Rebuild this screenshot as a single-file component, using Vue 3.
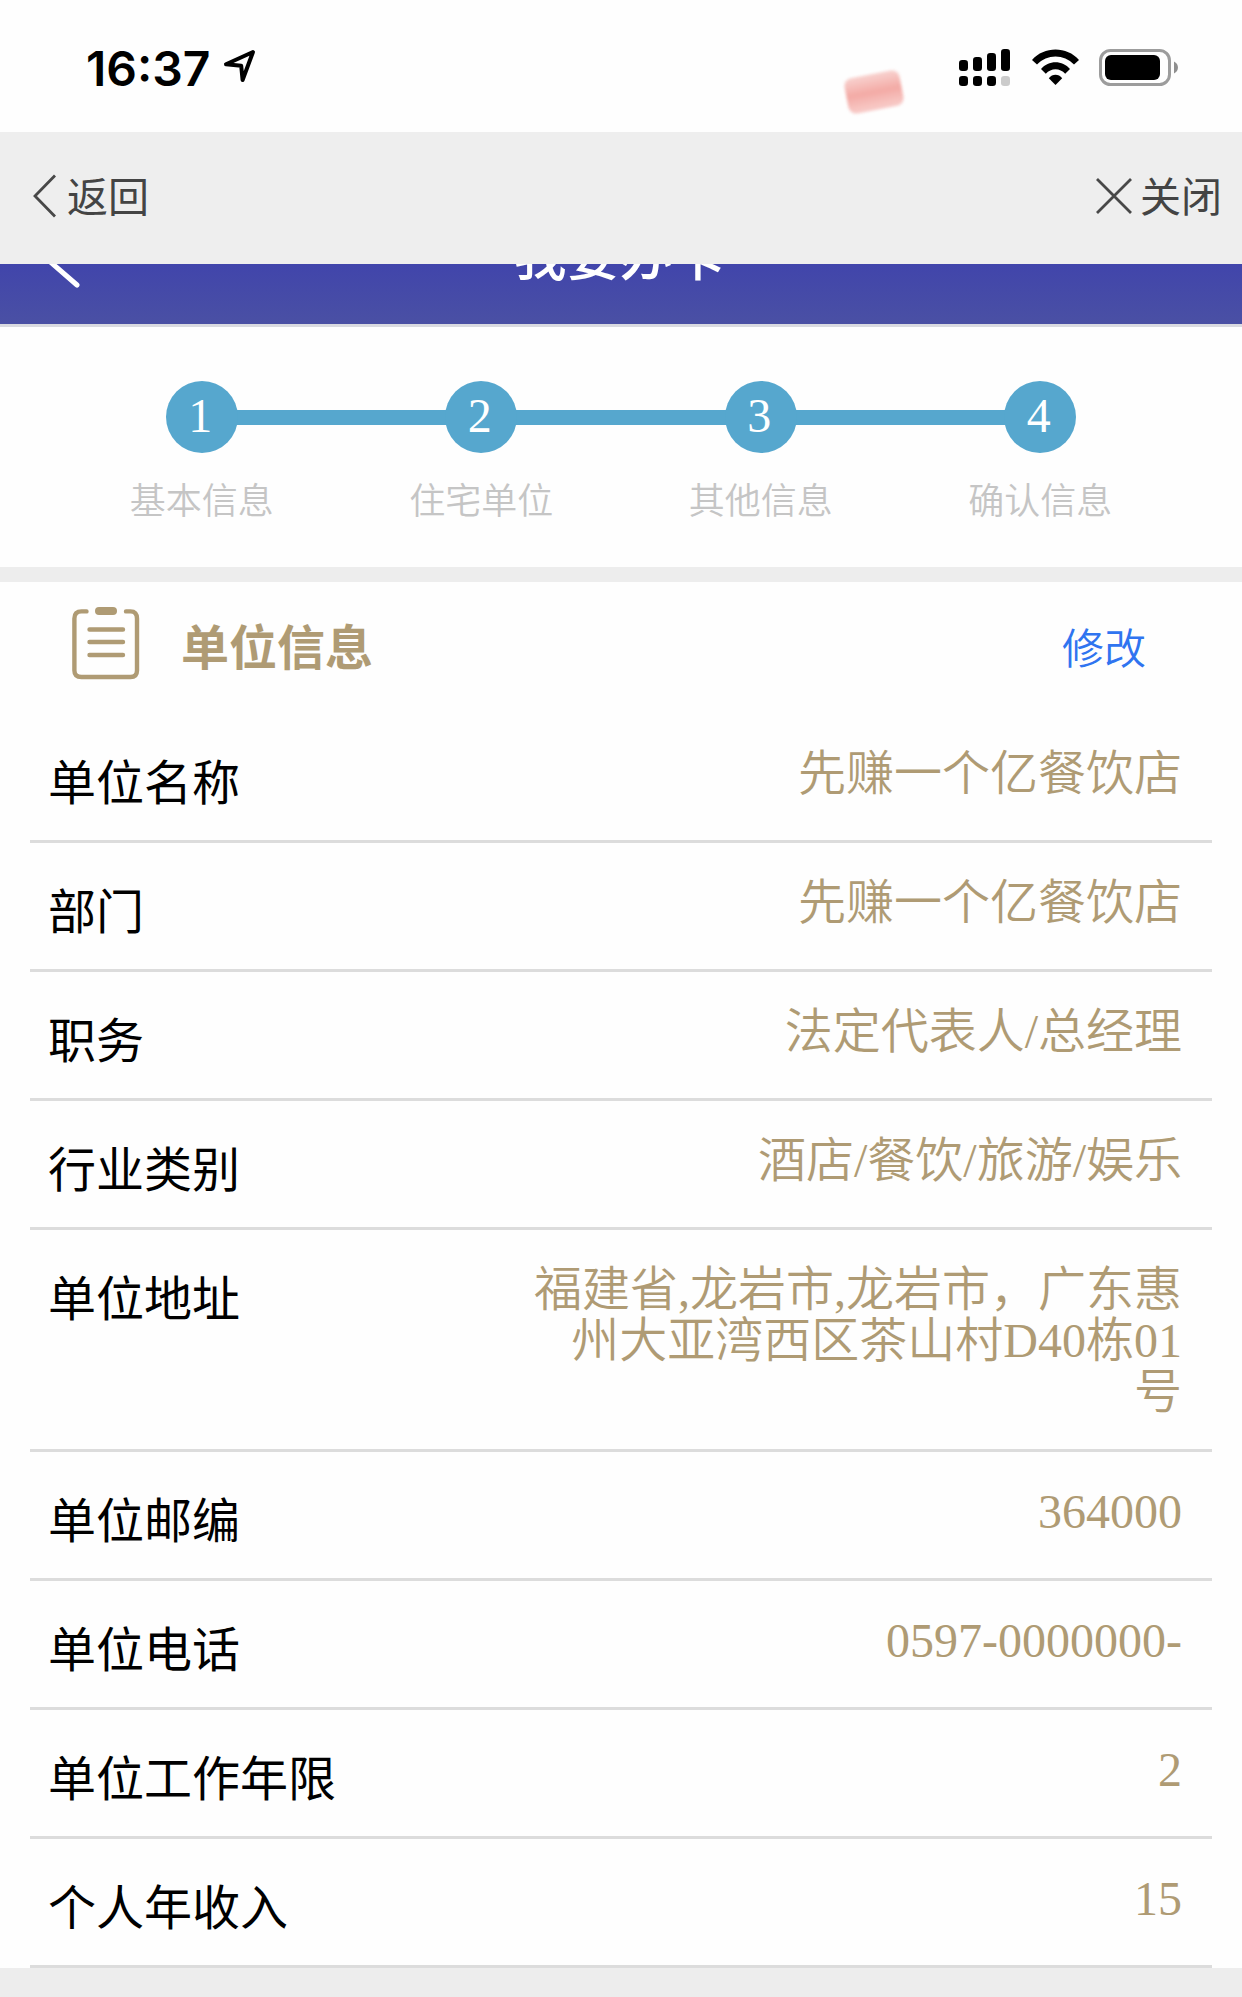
<template>
  <div class="page">
    <!-- phone status bar -->
    <div class="status">
      <span class="time">16:37</span>
      <svg class="loc" width="34" height="34" viewBox="0 0 34 34">
        <path d="M30 3 L3 15.3 L18.2 16.8 L19.6 31 Z" />
      </svg>
      <div class="smudge"></div>
      <svg class="signal" width="222" height="40" viewBox="0 0 222 40">
        <rect v-for="b in bars" :key="b.x" :x="b.x" :y="b.y" width="9" :height="22 - b.y" rx="3.2" />
        <rect v-for="b in bars" :key="'d' + b.x" :x="b.x" y="27" width="9" height="10" rx="3.2" :class="{ off: b.off }" />
        <g transform="translate(74 0)">
          <path d="M0 11 C12 -3 35 -3 47 11 L42 15.6 C32 4.8 15 4.8 5 15.6 Z" />
          <path d="M9 20 C16.5 11 30.5 11 38 20 L33.2 24.8 C28 18.8 19 18.8 13.8 24.8 Z" />
          <path d="M16.8 29.2 C20.4 24.6 26.6 24.6 30.2 29.2 L23.5 36 Z" />
        </g>
        <rect class="shell" x="142.5" y="1.5" width="69" height="34" rx="10" />
        <rect x="147" y="6" width="55" height="25" rx="6" />
        <path class="cap" d="M216 12.5 C221.3 15 221.3 22 216 24.5 Z" />
      </svg>
    </div>

    <div class="nav">
      <a class="nav-btn">
        <svg width="24" height="44" viewBox="0 0 24 44"><path d="M22 1.5 L2 22 L22 42.5" /></svg>
        <span>返回</span>
      </a>
      <a class="nav-btn close">
        <svg width="36" height="36" viewBox="0 0 36 36"><path d="M1 1 L35 35 M35 1 L1 35" /></svg>
        <span>关闭</span>
      </a>
    </div>

    <!-- page title, scrolled half way under the nav -->
    <div class="banner">
      <svg class="back" width="40" height="56" viewBox="0 0 40 56"><path d="M35 3 L5 27 L35 53" /></svg>
      <h1>我要办卡</h1>
    </div>

    <div class="steps">
      <div v-for="(s, i) in steps" :key="s" class="step">
        <i v-if="i > 0" class="line"></i>
        <b class="dot">{{ i + 1 }}</b>
        <span class="step-name">{{ s }}</span>
      </div>
    </div>

    <div class="card">
      <div class="card-head">
        <svg width="68" height="74" viewBox="0 0 68 74">
          <path d="M14.5 4.4 H9.5 Q2.4 4.4 2.4 11.5 V63.5 Q2.4 70 9.5 70 H58.5 Q65 70 65 63.5 V11.5 Q65 4.4 58.5 4.4 H54" />
          <path d="M17.5 22.5 H51 M17.5 35 H51 M17.5 48 H51" />
          <rect x="23" y="0" width="22" height="8" rx="4" />
        </svg>
        <h2>单位信息</h2>
        <a class="edit">修改</a>
      </div>
      <div v-for="row in rows" :key="row.label" class="row">
        <span class="label">{{ row.label }}</span>
        <span class="value">{{ row.value }}</span>
      </div>
    </div>
  </div>
</template>

<script setup>
const bars = [
  { x: 1, y: 11 },
  { x: 15, y: 8 },
  { x: 29, y: 4 },
  { x: 43, y: 0, off: true }
];

const steps = ['基本信息', '住宅单位', '其他信息', '确认信息'];

const rows = [
  { label: '单位名称', value: '先赚一个亿餐饮店' },
  { label: '部门', value: '先赚一个亿餐饮店' },
  { label: '职务', value: '法定代表人/总经理' },
  { label: '行业类别', value: '酒店/餐饮/旅游/娱乐' },
  { label: '单位地址', value: '福建省,龙岩市,龙岩市，广东惠州大亚湾西区茶山村D40栋01号' },
  { label: '单位邮编', value: '364000' },
  { label: '单位电话', value: '0597-0000000-' },
  { label: '单位工作年限', value: '2' },
  { label: '个人年收入', value: '15' }
];
</script>

<style>
body {
  margin: 0;
  background: #ededed;
}
</style>

<style scoped>
.page {
  width: 1242px;
  height: 1997px;
  overflow: hidden;
  background: #ededed;
  font-family: "Liberation Serif", "Noto Sans CJK SC", serif;
}

/* status bar */
.status {
  position: relative;
  display: flex;
  align-items: flex-start;
  height: 132px;
  box-sizing: border-box;
  padding: 49px 62px 0 86px;
  background: #fefefe;
}
.time {
  width: 137px;
  font: 600 48px/39px Inter, sans-serif;
  color: #000;
}
.loc {
  fill: none;
  stroke: #000;
  stroke-width: 4;
  stroke-linejoin: round;
}
.signal {
  margin-left: auto;
}
.signal .off {
  fill: #cbcbcb;
}
.signal .shell {
  fill: none;
  stroke: #9c9c9c;
  stroke-width: 3;
}
.signal .cap {
  fill: #8f8f8f;
}
.smudge {
  position: absolute;
  left: 846px;
  top: 74px;
  width: 56px;
  height: 36px;
  border-radius: 8px;
  background: linear-gradient(#f8d2cf, #f3aaa5 50%, #f8cdca);
  transform: rotate(-11deg);
  filter: blur(1.5px);
}

/* nav */
.nav {
  display: flex;
  justify-content: space-between;
  align-items: center;
  height: 132px;
  box-sizing: border-box;
  padding: 0 20px 4px 33px;
  background: #eee;
}
.nav-btn {
  display: flex;
  align-items: center;
  gap: 10px;
  font: 400 41px/60px "Noto Sans CJK SC", sans-serif;
  color: #444;
}
.nav-btn.close {
  gap: 8px;
}
.nav-btn span {
  margin-top: -5px;
}
.nav-btn svg {
  fill: none;
  stroke: #484848;
  stroke-width: 2.8;
}

.banner {
  position: relative;
  height: 60px;
  overflow: hidden;
  border-bottom: 3px solid #d9dae0;
  background: linear-gradient(#4145ab, #4a50a4);
}
.banner h1 {
  margin: -51px 3px 0 0;
  text-align: center;
  font: 500 53px/80px "Noto Sans CJK SC", sans-serif;
  color: #fff;
}
.back {
  position: absolute;
  left: 42px;
  top: -32px;
  fill: none;
  stroke: #fff;
  stroke-width: 5;
  stroke-linecap: round;
}

/* steps */
.steps {
  display: flex;
  height: 240px;
  box-sizing: border-box;
  padding: 54px 62px 0;
  background: #fefefe;
}
.step {
  position: relative;
  flex: 1;
  display: flex;
  flex-direction: column;
  align-items: center;
}
.line {
  position: absolute;
  left: -50%;
  top: 29px;
  width: 100%;
  height: 15px;
  background: #56a7ce;
}
.dot {
  position: relative;
  z-index: 1;
  width: 72px;
  height: 72px;
  border-radius: 50%;
  background: #56a7ce;
  color: #fff;
  font-weight: 400;
  font-size: 48px;
  line-height: 70px;
  text-align: center;
  text-indent: -3px;
}
.step-name {
  margin-top: 19px;
  font: 350 36px/52px "Noto Sans CJK SC", sans-serif;
  color: #c5c5c5;
}

/* info list */
.card {
  margin-top: 15px;
  background: #fefefe;
}
.card-head {
  display: flex;
  align-items: flex-start;
  height: 132px;
  box-sizing: border-box;
  padding: 25px 96px 0 72px;
}
.card-head svg {
  fill: none;
  stroke: #af9b74;
  stroke-width: 4.4;
  stroke-linecap: round;
}
.card-head svg rect {
  fill: #af9b74;
  stroke: none;
}
.card-head h2 {
  margin: 2px 0 0 41px;
  font: 700 48px/70px "Noto Sans CJK SC", sans-serif;
  color: #af9b74;
}
.edit {
  margin: 4px 0 0 auto;
  font: 350 42px/70px "Noto Sans CJK SC", sans-serif;
  color: #2f74f0;
}
.row {
  display: flex;
  justify-content: space-between;
  align-items: flex-start;
  margin: 0 30px;
  padding: 34px 30px 31px 18px;
  border-bottom: 3px solid #dcdcdc;
  min-height: 61px;
  font-size: 48px;
  line-height: 51px;
}
.row:nth-child(6) {
  padding-bottom: 32px;
}
.label {
  padding-top: 10px;
  color: #000;
}
.value {
  max-width: 654px;
  text-align: right;
  color: #af9b74;
  font-weight: 350;
}
</style>
